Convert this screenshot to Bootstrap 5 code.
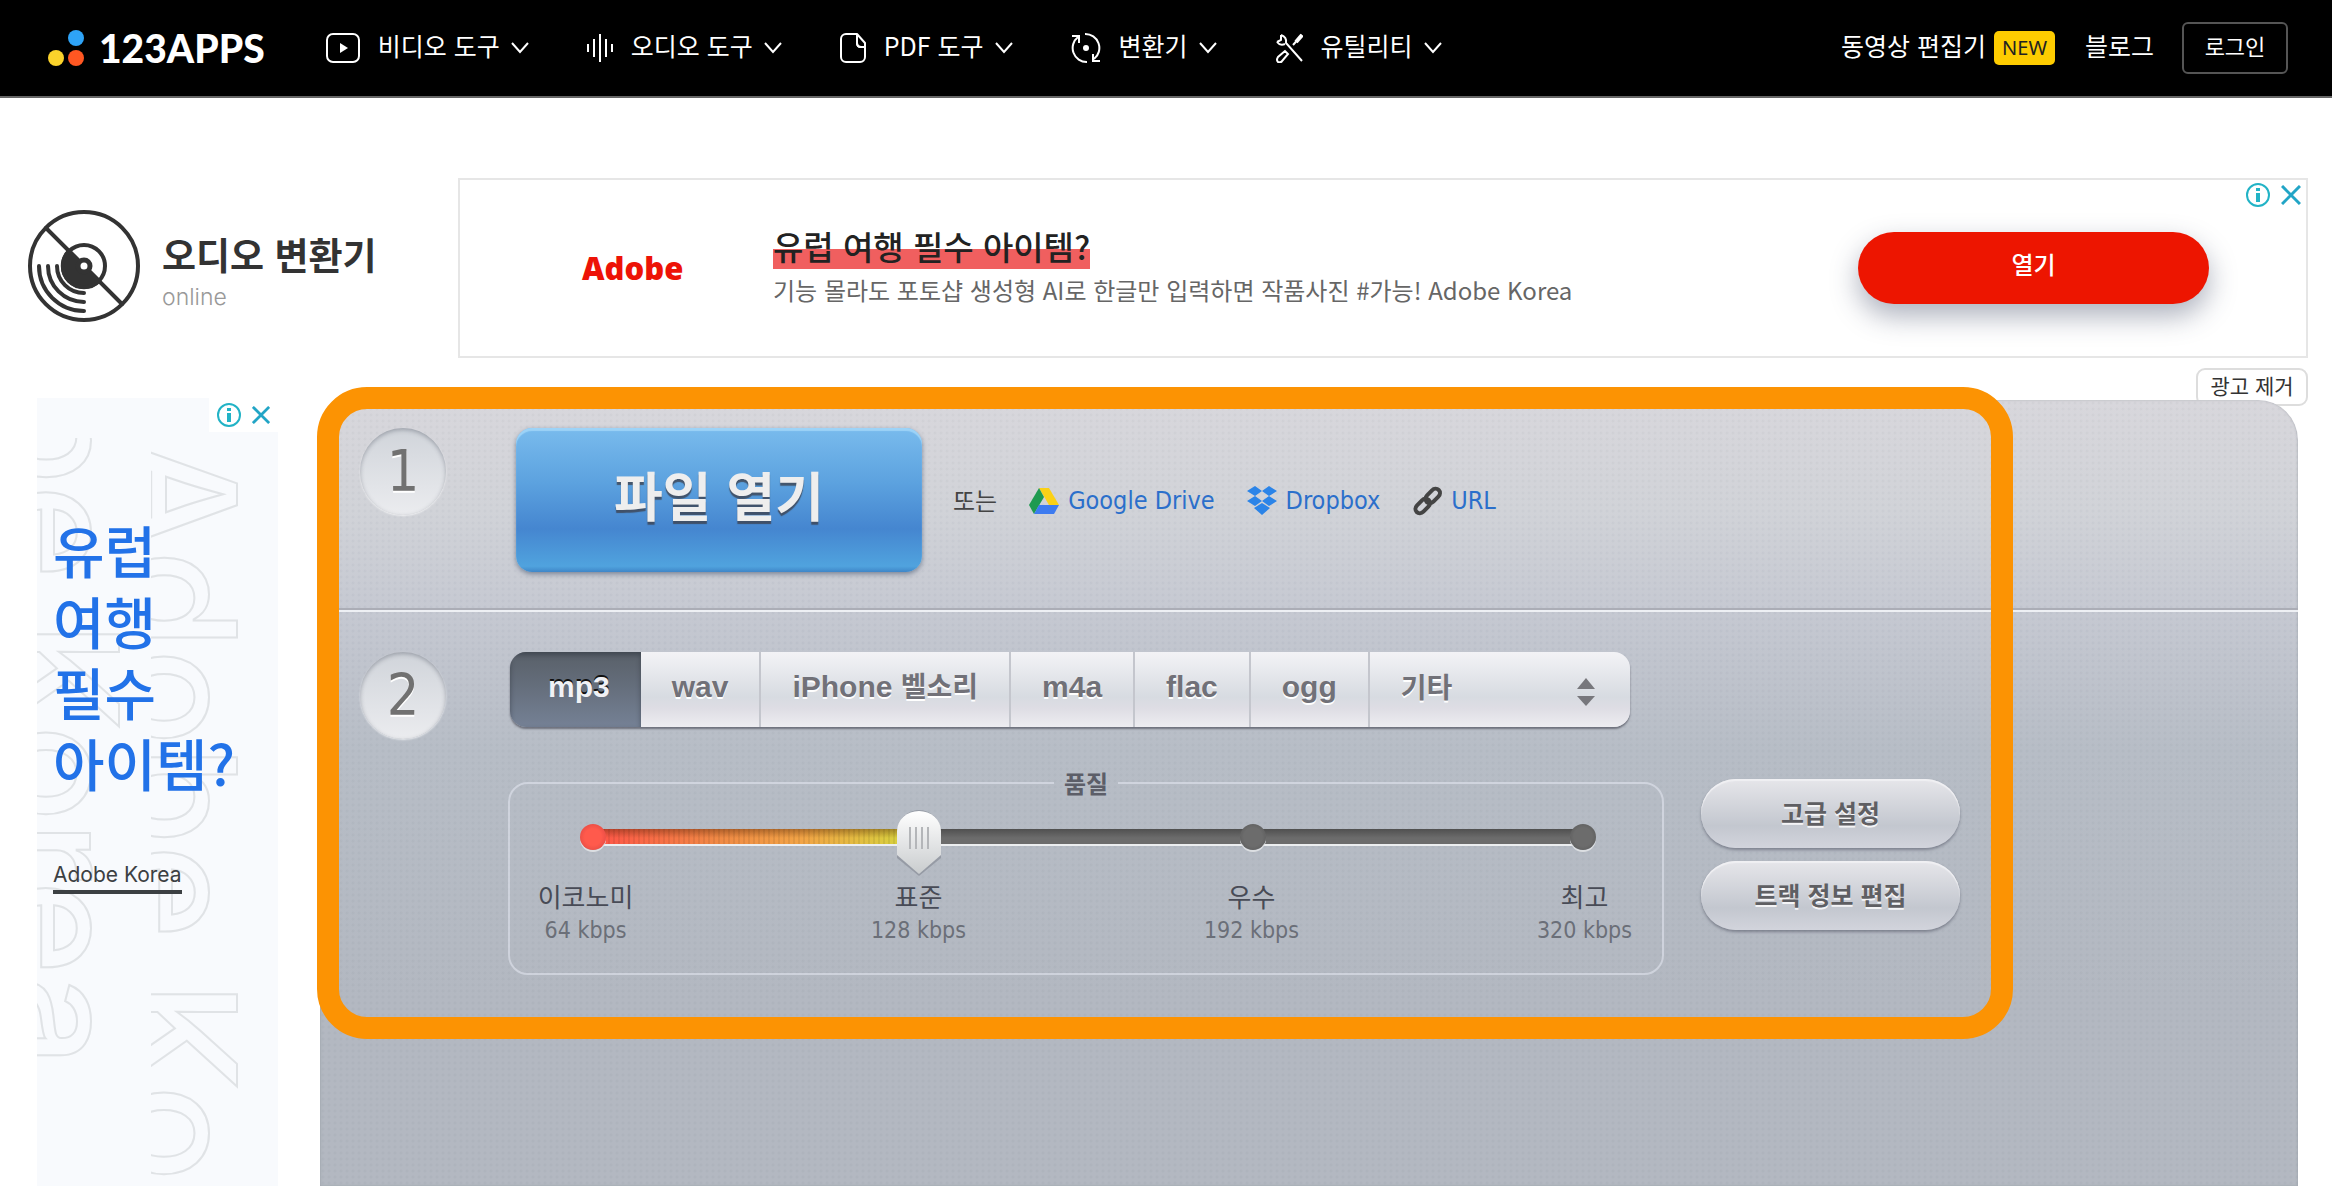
<!DOCTYPE html>
<html lang="ko">
<head>
<meta charset="utf-8">
<meta name="viewport" content="width=device-width, initial-scale=1">
<title>오디오 변환기</title>
<link rel="stylesheet" href="https://cdn.jsdelivr.net/npm/bootstrap@5.3.0/dist/css/bootstrap.min.css">
<style>
  body { font-family: "Noto Sans CJK KR", sans-serif; font-size: 24px; line-height: 32px; color: #333; }
  a { text-decoration: none; }
  svg { display: block; flex: none; }

  .topbar { background: #000; border-bottom: 2px solid #666; height: 98px; padding: 0 44px 0 48px; }
  .topbar .nav-link { color: #fff; gap: 18px; padding: 0; white-space: nowrap; font-size: 25px; }
  .topbar .nav-link span { display: flex; align-items: center; gap: 11px; padding-bottom: 6px; }
  .topbar .nav-link span svg { margin-top: 6px; }
  .menu-items { gap: 58px; margin-left: 61px; }
  .logo { gap: 15px; color: #fff; font: 900 39px/48px Lato, sans-serif; }
  .logo:hover { color: #fff; }
  .tag-new { background: #fecc00; color: #222; border-radius: 5px; font: 400 20px/34px "Noto Sans", sans-serif; padding: 0 8px; margin: 0 30px 0 8px; }
  .login { width: 106px; height: 52px; border: 2px solid #555; border-radius: 6px; color: #fff; font-size: 22px; padding: 0 0 5px; margin-left: 28px; }

  .intro { margin: 80px 24px 0 28px; }
  .brand-box { width: 430px; gap: 22px; padding-bottom: 4px; }
  .brand-name { font-size: 37px; line-height: 48px; font-weight: 700; color: #333; margin: 0 0 6px; }
  .brand-sub { font: 300 23px/26px Inter, sans-serif; color: #999; }
  .wide-ad { border: 2px solid #e6e6e6; height: 180px; padding: 0 97px 0 122px; }
  .adobe-word { color: #ed1307; font: 800 31px/40px "Open Sans", sans-serif; width: 191px; }
  .ad-title { font-size: 33px; line-height: 34px; padding-bottom: 6px; font-weight: 500; color: #222; background: linear-gradient(transparent 20px, #f05f5f 20px); }
  .ad-text { color: #666; line-height: 34px; padding-top: 4px; }
  .ad-open { width: 351px; height: 72px; border-radius: 36px; background: #ed1500; color: #fff; font-weight: 500; padding: 0 0 8px; box-shadow: 0 12px 28px rgba(50,60,90,.4); }
  .ad-open:hover { background: #d01200; color: #fff; }
  .ad-marks { gap: 11px; top: 3px; right: 5px; }
  .side-ad .ad-marks { right: 0; top: 0; background: #fff; padding: 5px 8px; }

  .side-ad { width: 241px; margin: 40px 42px 0 37px; background: #f8fafd; }
  .side-art { left: 0; top: 40px; }
  .side-art text { font: 500 160px Inter, sans-serif; fill: none; stroke: #e0e3e6; stroke-width: 2px; }
  .side-copy { padding: 115px 16px 0; }
  .side-title { font-size: 56px; line-height: 71px; font-weight: 500; color: #2272e8; margin: 0; }
  .side-by { font: 400 21px/30px Inter, sans-serif; color: #3c4043; border-bottom: 4px solid #3c4043; margin-top: 63px; }

  .work { margin-top: 10px; padding-right: 34px; }
  .remove-ads { height: 38px; width: 112px; margin: 0 -10px -6px 0; border: 2px solid #ddd; border-radius: 9px; background: #fff; color: #333; font-size: 21px; line-height: 30px; padding: 0 0 4px; }
  .panel { border-radius: 40px 40px 0 0;
    background: radial-gradient(rgba(60,70,90,.04) 1px, transparent 2px) 0 0/6px 6px,
      linear-gradient(#d8d7dc 0, #d1d3d8 110px, #c6c9d2 208px, #b7bdc6 350px, #b3b8c1 600px);
    box-shadow: inset 1px 0 2px #8d929b55, inset -1px 0 2px #8d929b55; }
  .step { padding: 28px 40px 36px; }
  .step + .step { border-top: 2px solid #abadb6; box-shadow: inset 0 2px #eef0f4; padding-top: 42px; }
  .step-no { width: 86px; height: 87px; border-radius: 50%; flex: none; font: 400 57px/87px "DejaVu Sans Condensed", "DejaVu Sans", sans-serif; color: #717171; text-align: center;
    text-shadow: 0 2px #fff; background: linear-gradient(#d0d4da, #ebecef); box-shadow: inset 0 2px 4px rgba(60,65,80,.35), 0 1px 2px rgba(255,255,255,.7); }
  .open-file { margin-left: 70px; width: 406px; height: 144px; border-radius: 16px; border: 0; color: #eee; font-size: 53px; line-height: 80px; font-weight: 700; padding: 0 0 12px; text-shadow: 0 3px 1px rgba(60,60,70,.75);
    background: linear-gradient(#79bbed, #5ca2df 38%, #4586d0 70%, #50a3de 96%, #3f86c8); box-shadow: inset 0 3px 1px #9dd3f7, 0 2px 5px rgba(40,60,90,.5); }
  .open-file:hover { background: #4a90d8; color: #eee; }
  .sources { gap: 32px; margin-left: 31px; color: #444; }
  .sources a { gap: 9px; color: #2b6fcb; font: 400 25px/32px "DejaVu Sans Condensed", "DejaVu Sans", sans-serif; padding-top: 2px; }

  .formats { width: 1120px; height: 75px; border-radius: 16px; overflow: hidden; box-shadow: 0 2px 2px rgba(70,72,85,.65); }
  .formats .btn, .formats .form-select { border: 0; border-radius: 0; padding: 0 31px 5px; font: 700 30px/40px "Liberation Sans", "Noto Sans CJK KR", sans-serif; color: #717178; text-shadow: 0 2px #fff; white-space: nowrap;
    background: linear-gradient(#f3f3f6, #d7dbe1 60%, #dedde4 75%, #ededf1); border-right: 2px solid #c4c6cd; }
  .formats .btn.active { color: #f0f1f5; padding-left: 38px; text-shadow: 0 -2px #111; background: linear-gradient(#596069, #636c79 40%, #758195); border-right: 0; box-shadow: inset 0 3px 5px rgba(40,45,55,.5); }
  .formats .hangul { font-size: 28px; }
  .formats .select-wrap { flex: 1 1 0; }
  .formats .form-select { height: 100%; width: 100%; border-right: 0; font: 700 28px/40px "Noto Sans CJK KR", sans-serif; padding-bottom: 8px; }
  .arrows { right: 34px; top: 26px; pointer-events: none; }

  .quality { width: 1156px; min-width: 0; border: 2px solid rgba(225,229,238,.6); border-radius: 20px; padding: 0 56px; height: 205px; margin: 43px 0 0 -2px; }
  .quality legend { float: none; width: auto; margin: 0 auto; padding: 0 10px; font-size: 24px; line-height: 26px; font-weight: 700; color: #5c5e68; }
  .rail { height: 66px; margin-top: 14px; padding: 0 10px 0 14px; }
  .rail-bar { left: 22px; right: 18px; top: 19px; height: 15px; background: linear-gradient(#505050, #6c6c6c 60%); box-shadow: 0 2px #eceef0; }
  .rail-fill { height: 15px; width: 33%; background: repeating-linear-gradient(90deg, rgba(0,0,0,.07) 0 2px, transparent 2px 5px), linear-gradient(rgba(80,30,0,.4), transparent 60%), linear-gradient(90deg, #ff5148, #f08a45 40%, #f2a446 65%, #d3d83c); }
  .rail-stop { width: 26px; height: 26px; border-radius: 50%; background: radial-gradient(#6c6c6c 50%, #555); box-shadow: 0 2px #dcdfe2; position: relative; margin-top: 14px; }
  .rail-stop.low { background: radial-gradient(#ff5a4c 45%, #d84440); }
  .rail-stop.hid { visibility: hidden; }
  .rail input { appearance: none; -webkit-appearance: none; left: 4px; top: 0; height: 66px; width: calc(100% - 6px); background: transparent; margin: 0; z-index: 2; }
  .rail input::-webkit-slider-thumb { -webkit-appearance: none; width: 46px; height: 66px; border: 0; background: url("data:image/svg+xml,%3Csvg xmlns='http://www.w3.org/2000/svg' viewBox='0 0 46 66'%3E%3Cdefs%3E%3ClinearGradient id='g' x2='0' y2='1'%3E%3Cstop stop-color='%23fff'/%3E%3Cstop offset='1' stop-color='%23c9ccce'/%3E%3C/linearGradient%3E%3C/defs%3E%3Cpath d='M1 22a22 22 0 0 1 44 0V48L23 66 1 48z' fill='%23707680' opacity='.45'/%3E%3Cpath d='M1 21a22 20 0 0 1 44 0V45L23 64 1 45z' fill='url(%23g)'/%3E%3Cpath d='M14 17v22M20 17v22M26 17v22M32 17v22' stroke='%23b4b6b9' stroke-width='2'/%3E%3C/svg%3E") center/46px 66px no-repeat; }
  .levels { margin: 2px -46px 0 -48px; color: #484b56; font-size: 26px; line-height: 36px; text-align: center; }
  .levels div { width: 135px; }
  .levels span { display: block; font: 400 23px/32px "DejaVu Sans Condensed", "DejaVu Sans", sans-serif; color: #6b6f78; }

  .side-actions { gap: 13px; margin: 52px 0 0 37px; }
  .pill { width: 259px; height: 69px; border: 0; border-radius: 35px; font-size: 25px; line-height: 36px; font-weight: 700; color: #5f5f63; padding: 0 0 4px; text-shadow: 0 2px #f4f4f6;
    background: linear-gradient(#e6e6ea, #c3c7cf 68%, #d2d4dc); box-shadow: inset 0 2px 1px #f0f0f3, 0 2px 3px rgba(90,94,108,.6); }
  .highlight-frame { left: -3px; top: -13px; width: 1696px; height: 652px; border: 22px solid #fc9303; border-radius: 50px; pointer-events: none; }
</style>
</head>
<body class="d-flex flex-column min-vh-100 bg-white">

<header class="topbar d-flex align-items-center">
  <a class="logo d-flex align-items-center" href="#">
    <svg width="36" height="36" viewBox="0 0 36 36" aria-hidden="true"><circle cx="28" cy="8" r="8" fill="#2ea3f7"/><circle cx="8" cy="28" r="8" fill="#fbd32b"/><circle cx="28" cy="28" r="8" fill="#ff5722"/></svg>
    <span>123APPS</span>
  </a>
  <nav class="menu-items d-flex align-items-center">
    <a class="nav-link d-flex align-items-center" href="#">
      <svg width="34" height="30" viewBox="0 0 34 30" fill="none" stroke="#fff" stroke-width="2"><rect x="1" y="1" width="32" height="28" rx="6"/><path d="M14 10v10l8-5z" fill="#fff" stroke="none"/></svg>
      <span>비디오 도구 <svg width="18" height="12" viewBox="0 0 18 12" fill="none" stroke="#fff" stroke-width="2"><path d="m1 1 8 9 8-9"/></svg></span></a>
    <a class="nav-link d-flex align-items-center" href="#">
      <svg width="26" height="30" viewBox="0 0 26 30" stroke="#fff" stroke-width="2"><path d="M1 11v8M7 6v18M13 1v28M19 6v18M25 11v8"/></svg>
      <span>오디오 도구 <svg width="18" height="12" viewBox="0 0 18 12" fill="none" stroke="#fff" stroke-width="2"><path d="m1 1 8 9 8-9"/></svg></span></a>
    <a class="nav-link d-flex align-items-center" href="#">
      <svg width="26" height="30" viewBox="0 0 26 30" fill="none" stroke="#fff" stroke-width="2"><path d="M17 1H6a5 5 0 0 0-5 5v18a5 5 0 0 0 5 5h14a5 5 0 0 0 5-5V10zv9q0 4 4 4h4" stroke-linejoin="round"/><path d="M17 1v9q0 4 4 4h4"/></svg>
      <span>PDF 도구 <svg width="18" height="12" viewBox="0 0 18 12" fill="none" stroke="#fff" stroke-width="2"><path d="m1 1 8 9 8-9"/></svg></span></a>
    <a class="nav-link d-flex align-items-center" href="#">
      <svg width="30" height="32" viewBox="0 0 30 32" fill="none" stroke="#fff" stroke-width="2"><path d="M14 2a14 14 0 0 1 9 25M22 22v7h7M16 30A14 14 0 0 1 7 5M8 11V4H1"/><circle cx="15" cy="16" r="3" fill="#fff" stroke="none"/></svg>
      <span>변환기 <svg width="18" height="12" viewBox="0 0 18 12" fill="none" stroke="#fff" stroke-width="2"><path d="m1 1 8 9 8-9"/></svg></span></a>
    <a class="nav-link d-flex align-items-center" href="#">
      <svg width="28" height="30" viewBox="0 0 28 30" fill="none" stroke="#fff" stroke-width="2"><path d="M6 2v5L2 9M6 2q6 2 5 8l16 18M2 9q3 4 8 2"/><path d="m27 2-9 10"/><path d="M10 18l-7 6q-2 3 0 5 3 1 4-1l6-7z"/><path d="m27 2-6 7" stroke-width="4"/></svg>
      <span>유틸리티 <svg width="18" height="12" viewBox="0 0 18 12" fill="none" stroke="#fff" stroke-width="2"><path d="m1 1 8 9 8-9"/></svg></span></a>
  </nav>
  <div class="d-flex align-items-center ms-auto">
    <a class="nav-link" href="#"><span>동영상 편집기</span></a>
    <div class="tag-new">NEW</div>
    <a class="nav-link" href="#"><span>블로그</span></a>
    <button type="button" class="btn login">로그인</button>
  </div>
</header>

<div class="intro d-flex align-items-center">
  <div class="brand-box d-flex align-items-center flex-shrink-0">
    <svg width="112" height="112" viewBox="0 0 112 112" fill="none" stroke="#333" stroke-width="4" stroke-linecap="round" aria-hidden="true">
      <circle cx="56" cy="56" r="54"/><path d="M18 18 94 94"/>
      <circle cx="56" cy="56" r="21"/><path d="M41 41a21 21 0 1 0 30 30z" fill="#333"/>
      <circle cx="56" cy="56" r="6" fill="#fff" stroke-width="5"/>
      <path d="M11 56a45 45 0 0 0 45 45M20 56a36 36 0 0 0 36 36M29 56a27 27 0 0 0 27 27"/></svg>
    <div class="pt-2">
      <h1 class="brand-name">오디오 변환기</h1>
      <div class="brand-sub">online</div>
    </div>
  </div>
  <div class="wide-ad position-relative flex-grow-1 d-flex align-items-center">
    <div class="adobe-word flex-shrink-0">Adobe</div>
    <div>
      <a class="ad-title d-inline-block" href="#">유럽 여행 필수 아이템?</a>
      <div class="ad-text">기능 몰라도 포토샵 생성형 AI로 한글만 입력하면 작품사진 #가능! Adobe Korea</div>
    </div>
    <button type="button" class="btn ad-open fs-4 ms-auto">열기</button>
    <div class="ad-marks position-absolute d-flex align-items-center">
      <svg width="24" height="24" viewBox="0 0 24 24" fill="none" stroke="#22b3c6" stroke-width="2"><circle cx="12" cy="12" r="11"/><path d="M12 10v9M12 5v3" stroke-width="4"/></svg>
      <svg width="20" height="20" viewBox="0 0 20 20" stroke="#22a5c6" stroke-width="3"><path d="m1 1 18 18M19 1 1 19"/></svg>
    </div>
  </div>
</div>

<main class="d-flex flex-grow-1">
  <aside class="side-ad position-relative overflow-hidden flex-shrink-0">
    <svg class="side-art position-absolute" width="241" height="740" viewBox="0 0 241 740" aria-hidden="true">
      <defs><clipPath id="c1"><path d="M114 0h127v760H114z"/></clipPath><clipPath id="c2"><path d="M0 0h112v760H0z"/></clipPath></defs>
      <g clip-path="url(#c1)"><text transform="translate(84 0) rotate(90)">Adobe Korea</text></g>
      <g clip-path="url(#c2)"><text transform="translate(-34 -360) rotate(90)">Adobe Korea</text></g>
    </svg>
    <div class="ad-marks position-absolute d-flex align-items-center">
      <svg width="24" height="24" viewBox="0 0 24 24" fill="none" stroke="#22b3c6" stroke-width="2"><circle cx="12" cy="12" r="11"/><path d="M12 10v9M12 5v3" stroke-width="4"/></svg>
      <svg width="18" height="18" viewBox="0 0 20 20" stroke="#22a5c6" stroke-width="3"><path d="m1 1 18 18M19 1 1 19"/></svg>
    </div>
    <div class="side-copy position-relative">
      <h2 class="side-title">유럽<br>여행<br>필수<br>아이템?</h2>
      <a class="side-by d-inline-block" href="#">Adobe Korea</a>
    </div>
  </aside>

  <section class="work d-flex flex-column flex-grow-1">
    <button type="button" class="btn remove-ads align-self-end">광고 제거</button>
    <div class="panel position-relative flex-grow-1">
      <div class="step d-flex align-items-start">
        <div class="step-no">1</div>
        <button type="button" class="btn open-file">파일 열기</button>
        <div class="sources d-flex align-items-center align-self-center">
          <span>또는</span>
          <a class="d-flex align-items-center" href="#"><svg width="30" height="28" viewBox="0 0 30 28"><path d="M10 1h10l10 17H20z" fill="#fbd116"/><path d="M10 1 0 18l5 9 10-17z" fill="#1e9a50"/><path d="M10 18h20l-5 9H5z" fill="#3d7bf0"/></svg>Google Drive</a>
          <a class="d-flex align-items-center" href="#"><svg width="30" height="30" viewBox="0 0 30 30" fill="#2b84e8"><path d="m8 0 7 5-7 5-8-5zM22 0l8 5-8 5-7-5zM0 15l8-5 7 5-7 5zM22 10l8 5-8 5-7-5zM7 22l8-5 8 5-8 7z"/></svg>Dropbox</a>
          <a class="d-flex align-items-center" href="#"><svg width="30" height="30" viewBox="0 0 30 30" fill="none" stroke="#444" stroke-width="4"><rect x="-8" y="-4" width="17" height="9" rx="5" transform="translate(20 10) rotate(-45)"/><rect x="-8" y="-4" width="17" height="9" rx="5" transform="translate(10 20) rotate(-45)"/></svg>URL</a>
        </div>
      </div>

      <div class="step d-flex align-items-start">
        <div class="step-no">2</div>
        <div class="ms-5 ps-3">
          <div class="formats d-flex">
            <button type="button" class="btn active">mp3</button>
            <button type="button" class="btn">wav</button>
            <button type="button" class="btn">iPhone <span class="hangul">벨소리</span></button>
            <button type="button" class="btn">m4a</button>
            <button type="button" class="btn">flac</button>
            <button type="button" class="btn">ogg</button>
            <div class="select-wrap position-relative">
              <select class="form-select" aria-label="기타"><option>기타</option></select>
              <svg class="arrows position-absolute" width="20" height="28" viewBox="0 0 20 28"><path d="M10 0l9 11H1z" fill="#77777c"/><path d="M1 18h18l-9 10z" fill="#77777c"/></svg>
            </div>
          </div>
          <div class="d-flex align-items-start">
            <fieldset class="quality">
              <legend>품질</legend>
              <div class="rail position-relative d-flex justify-content-between align-items-start">
                <div class="rail-bar position-absolute"><div class="rail-fill"></div></div>
                <div class="rail-stop low"></div><div class="rail-stop hid"></div><div class="rail-stop"></div><div class="rail-stop"></div>
                <input class="position-absolute" type="range" min="0" max="100" value="33" aria-label="품질">
              </div>
              <div class="levels d-flex justify-content-between">
                <div>이코노미<span>64 kbps</span></div>
                <div>표준<span>128 kbps</span></div>
                <div>우수<span>192 kbps</span></div>
                <div>최고<span>320 kbps</span></div>
              </div>
            </fieldset>
            <div class="side-actions d-flex flex-column">
              <button type="button" class="btn pill">고급 설정</button>
              <button type="button" class="btn pill">트랙 정보 편집</button>
            </div>
          </div>
        </div>
      </div>
      <div class="highlight-frame position-absolute"></div>
    </div>
  </section>
</main>

<script src="https://cdn.jsdelivr.net/npm/bootstrap@5.3.0/dist/js/bootstrap.bundle.min.js"></script>
</body>
</html>
